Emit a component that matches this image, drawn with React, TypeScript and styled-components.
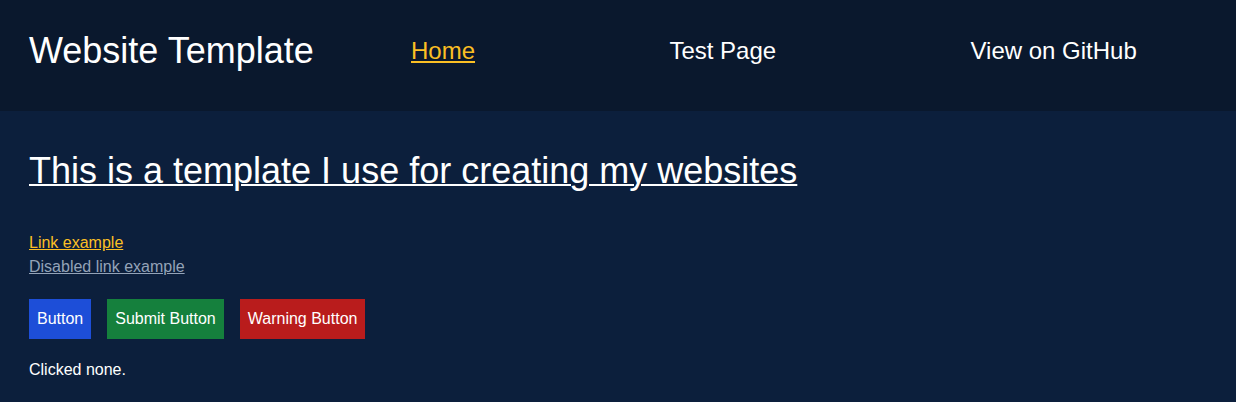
import * as React from 'react';
import styled, { createGlobalStyle } from 'styled-components';

const GlobalStyle = createGlobalStyle`
    html, body {
        margin: 0;
        padding: 0;
        background: #0c1f3c;
        color: #fff;
        font-family: "Liberation Sans", Arial, sans-serif;
    }
`;

const Header = styled.header`
    display: flex;
    align-items: center;
    height: 111px;
    box-sizing: border-box;
    padding: 0 2px 9px 29px;
    background: #0a182d;
`;

const SiteTitle = styled.div`
    font-size: 36px;
    line-height: 1.15;
    white-space: nowrap;
`;

const Nav = styled.nav`
    flex: 1;
    display: flex;
    justify-content: space-around;
    align-items: center;
`;

const NavLink = styled.a<{ $active?: boolean }>`
    font-size: 24px;
    line-height: 1.15;
    color: ${(p) => (p.$active ? '#fbbf24' : '#fff')};
    text-decoration: ${(p) => (p.$active ? 'underline' : 'none')};
    cursor: pointer;
`;

const Main = styled.main`
    padding: 39px 29px 20px;
`;

const Heading = styled.h1`
    margin: 0 0 40px;
    font-size: 36px;
    font-weight: normal;
    line-height: 1.15;
    text-decoration: underline;
    text-decoration-thickness: 2px;
`;

const LinkList = styled.div`
    display: flex;
    flex-direction: column;
    align-items: flex-start;
    font-size: 16px;
    line-height: 24px;
`;

const TextLink = styled.a<{ $disabled?: boolean }>`
    color: ${(p) => (p.$disabled ? '#94a3b8' : '#fbbf24')};
    text-decoration: underline;
    cursor: ${(p) => (p.$disabled ? 'default' : 'pointer')};
`;

const ButtonRow = styled.div`
    display: flex;
    gap: 16px;
    margin-top: 20px;
`;

const buttonColors = {
    primary: '#1d4ed8',
    success: '#15803d',
    danger: '#b91c1c',
};

const Button = styled.button<{ $variant: keyof typeof buttonColors }>`
    height: 40px;
    padding: 0 8px;
    border: none;
    border-radius: 0;
    background: ${(p) => buttonColors[p.$variant]};
    color: #fff;
    font-family: inherit;
    font-size: 16px;
    cursor: pointer;
`;

const Status = styled.p`
    margin: 19px 0 0;
    font-size: 16px;
    line-height: 24px;
`;

export default function App() {
    const [clicked, setClicked] = React.useState('none');

    return (
        <>
            <GlobalStyle />
            <Header>
                <SiteTitle>Website Template</SiteTitle>
                <Nav>
                    <NavLink $active>Home</NavLink>
                    <NavLink>Test Page</NavLink>
                    <NavLink>View on GitHub</NavLink>
                </Nav>
            </Header>
            <Main>
                <Heading>This is a template I use for creating my websites</Heading>
                <LinkList>
                    <TextLink>Link example</TextLink>
                    <TextLink $disabled>Disabled link example</TextLink>
                </LinkList>
                <ButtonRow>
                    <Button $variant="primary" onClick={() => setClicked('button')}>Button</Button>
                    <Button $variant="success" onClick={() => setClicked('submit')}>Submit Button</Button>
                    <Button $variant="danger" onClick={() => setClicked('warning')}>Warning Button</Button>
                </ButtonRow>
                <Status>Clicked {clicked}.</Status>
            </Main>
        </>
    );
}
